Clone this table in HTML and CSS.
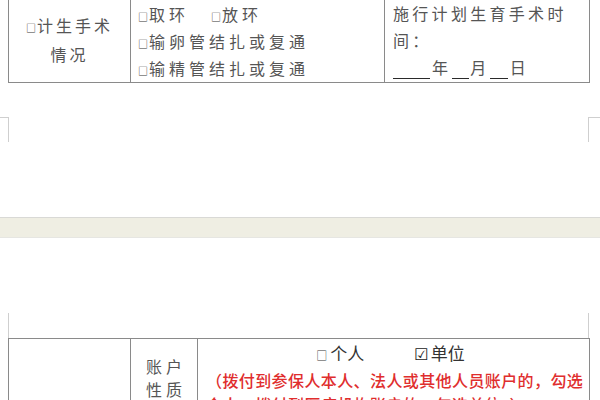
FILE: index.html
```html
<!DOCTYPE html>
<html lang="zh-CN">
<head>
<meta charset="utf-8">
<title>表格</title>
<link rel="stylesheet" href="styles.css">
</head>
<body>
<div class="doc">
  <section class="page page-end">
    <table class="form form-a">
      <colgroup><col class="a1"><col class="a2"><col class="a3"></colgroup>
      <tr>
        <td class="label-cell"><span class="cb">□</span>计生手术<br>情况</td>
        <td class="opts-cell">
          <div class="opt-line"><span class="opt"><span class="cb">□</span>取环</span><span class="opt opt-gap"><span class="cb">□</span>放环</span></div>
          <div class="opt-line"><span class="cb">□</span>输卵管结扎或复通</div>
          <div class="opt-line"><span class="cb">□</span>输精管结扎或复通</div>
        </td>
        <td class="date-cell">
          <div class="opt-line">施行计划生育手术时</div>
          <div class="opt-line">间：</div>
          <div class="opt-line"><span class="blank b-year"></span><span class="unit u-year">年</span><span class="blank b-short"></span><span class="unit u-month">月</span><span class="blank b-short2"></span><span class="unit">日</span></div>
        </td>
      </tr>
    </table>
    <div class="marks marks-bottom"><span class="mk mk-l"></span><span class="mk mk-r"></span></div>
  </section>

  <div class="gap"></div>

  <section class="page page-start">
    <div class="marks marks-top"><span class="mk mk-l"></span><span class="mk mk-r"></span></div>
    <table class="form form-b">
      <colgroup><col class="b1"><col class="b2"><col class="b3"></colgroup>
      <tr>
        <td class="empty-cell"></td>
        <td class="acct-label">账户<br>性质</td>
        <td class="acct-cell">
          <div class="acct-type"><span class="choice"><span class="cb">□</span>个人</span><span class="choice choice-gap"><span class="tick">☑</span>单位</span></div>
          <p class="note">（拨付到参保人本人、法人或其他人员账户的，勾选<br>个人；拨付到医疗机构账户的，勾选单位。）</p>
        </td>
      </tr>
    </table>
  </section>
</div>
</body>
</html>
```

FILE: styles.css
```css
html, body {
  margin: 0;
  padding: 0;
  background: #ffffff;
}

body {
  width: 600px;
  height: 400px;
  overflow: hidden;
  font-family: "Noto Sans CJK SC", "Noto Sans", sans-serif;
  color: #555555;
}

.doc {
  display: flex;
  flex-direction: column;
}

/* ---------- tables ---------- */
.form {
  border-collapse: collapse;
  table-layout: fixed;
  width: 581px;
  margin-left: 8px;
}

.form td {
  border: 1px solid #8a8a8a;
  padding: 0;
}

.form-a {
  margin-top: -4px;
  font-size: 16px;
  font-weight: 400;
}

.a1 { width: 122px; }
.a2 { width: 254px; }
.a3 { width: 205px; }

.label-cell {
  text-align: center;
  vertical-align: middle;
  line-height: 26px;
  letter-spacing: 3px;
}

.opts-cell {
  vertical-align: top;
  padding: 4px 0 0 7px !important;
  letter-spacing: 4px;
}

.date-cell {
  vertical-align: top;
  padding: 3px 0 0 8px !important;
  letter-spacing: 3.3px;
}

.opt-line {
  line-height: 27px;
  height: 27px;
  white-space: nowrap;
}

.opt {
  display: inline-block;
}

.opt-gap {
  margin-left: 22px;
}

.cb {
  font-size: 10px;
  letter-spacing: 0;
  margin-right: 1px;
  color: #3a3a3a;
  font-weight: 400;
}

.blank {
  display: inline-block;
  height: 0;
  border-bottom: 1.5px solid #2a2a2a;
  vertical-align: -5px;
}

.b-year { width: 37px; margin-right: 2px; }
.b-short { width: 17px; margin-left: 1px; margin-right: 1px; }
.b-short2 { width: 18px; margin-right: 2px; }

.unit {
  display: inline-block;
}

/* ---------- page corner marks ---------- */
.marks {
  display: flex;
  justify-content: space-between;
  height: 25px;
}

.mk {
  display: block;
  box-sizing: border-box;
  height: 25px;
  border-color: #cfcfcf;
  border-style: solid;
  border-width: 0;
}

.marks-bottom {
  margin-top: 34px;
}

.marks-bottom .mk-l {
  width: 9px;
  border-top-width: 1px;
  border-right-width: 1px;
}

.marks-bottom .mk-r {
  width: 12px;
  border-top-width: 1px;
  border-left-width: 1px;
}

.marks-top {
  margin-top: 75px;
}

.marks-top .mk-l {
  width: 9px;
  border-right-width: 1px;
}

.marks-top .mk-r {
  width: 12px;
  border-left-width: 1px;
}

/* ---------- gap between pages ---------- */
.gap {
  margin-top: 75px;
  height: 19px;
  background: #efeee3;
  border-top: 1px solid #d9d9d6;
  border-bottom: 1px solid #e6e6e2;
}

/* ---------- second table ---------- */
.b1 { width: 122px; }
.b2 { width: 67px; }
.b3 { width: 392px; }

.form-b td {
  height: 90px;
  vertical-align: top;
}

.acct-label {
  text-align: center;
  line-height: 23px;
  padding-top: 16px !important;
  letter-spacing: 4px;
  font-size: 16px;
  font-weight: 400;
  padding-left: 4px !important;
}

.acct-cell {
  padding: 0 0 0 8px !important;
}

.acct-type {
  display: flex;
  justify-content: center;
  line-height: 27px;
  height: 27px;
  font-size: 17px;
  color: #333333;
  font-weight: 400;
  padding-right: 14px;
}

.choice-gap {
  margin-left: 50px;
}

.acct-type .cb {
  font-size: 11px;
  margin-right: 3px;
}

.tick {
  font-family: "DejaVu Sans", sans-serif;
  font-size: 16px;
  color: #222;
  margin-right: 2px;
}

.note {
  margin: 0;
  color: #e02e2e;
  font-size: 16px;
  font-weight: 500;
  line-height: 24px;
  padding-top: 2px;
  letter-spacing: 0.4px;
  white-space: nowrap;
}
```
